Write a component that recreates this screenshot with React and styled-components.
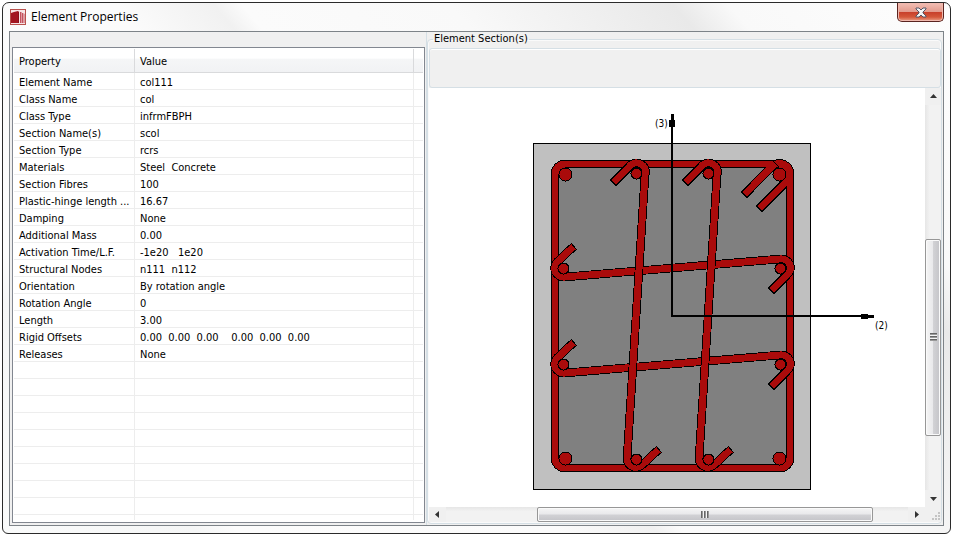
import React from "react";
import styled, { createGlobalStyle } from "styled-components";

const properties = [
    { name: "Element Name", value: "col111" },
    { name: "Class Name", value: "col" },
    { name: "Class Type", value: "infrmFBPH" },
    { name: "Section Name(s)", value: "scol" },
    { name: "Section Type", value: "rcrs" },
    { name: "Materials", value: "Steel  Concrete" },
    { name: "Section Fibres", value: "100" },
    { name: "Plastic-hinge length ...", value: "16.67" },
    { name: "Damping", value: "None" },
    { name: "Additional Mass", value: "0.00" },
    { name: "Activation Time/L.F.", value: "-1e20   1e20" },
    { name: "Structural Nodes", value: "n111  n112" },
    { name: "Orientation", value: "By rotation angle" },
    { name: "Rotation Angle", value: "0" },
    { name: "Length", value: "3.00" },
    { name: "Rigid Offsets", value: "0.00  0.00  0.00    0.00  0.00  0.00" },
    { name: "Releases", value: "None" },
];

const emptyRows = Array.from({ length: 9 }, (_, i) => i);

// centre lines of the reinforcement
const stirrup =
    "M747 192 L771.8 166.8 A10.5 10.5 0 0 1 790 175 V458 A10 10 0 0 1 780 468 H565 A10 10 0 0 1 555 458 V174 A10 10 0 0 1 565 164 H779 A10.5 10.5 0 0 1 787 181 L762 206";
const crossTies = [
    "M571 249 L557 262 A9 9 0 0 0 565 277 L780 259 A9 9 0 0 1 787 275 L774 288",
    "M571 345 L557 358 A9 9 0 0 0 565 373 L780 355 A9 9 0 0 1 787 371 L774 384",
];
const verticalTies = [
    "M616 180 L629 167 A9 9 0 0 1 645 175 L627 459 A9 9 0 0 0 642 465 L656 452",
    "M688 180 L701 167 A9 9 0 0 1 717 175 L699 459 A9 9 0 0 0 714 465 L728 452",
];
const rebars = [
    [565, 174, 7],
    [779, 174, 7],
    [565, 458, 7],
    [779, 458, 7],
    [636, 173, 6],
    [708, 173, 6],
    [636, 459, 6],
    [708, 459, 6],
    [563, 268, 6],
    [780, 268, 6],
    [563, 364, 6],
    [780, 364, 6],
];

const Bar = ({ d }) => (
    <g fill="none" strokeLinecap="square">
        <path d={d} stroke="#000" strokeWidth="8.6" />
        <path d={d} stroke="#aa0b0b" strokeWidth="6.9" />
    </g>
);

const SectionDrawing = () => (
    <Drawing viewBox="429 88 496 419" role="img" aria-label="Element section">
        <g shapeRendering="crispEdges">
            <rect x="533.5" y="143.5" width="277" height="346" fill="#c0c0c0" stroke="#000" />
            <rect x="555" y="164" width="235" height="304" rx="10" fill="#808080" />
            <Bar d={stirrup} />
            <path d="M773 161 L779 167" stroke="#000" />
            {crossTies.map((d) => (
                <Bar key={d} d={d} />
            ))}
            {verticalTies.map((d) => (
                <Bar key={d} d={d} />
            ))}
            {rebars.map(([cx, cy, r]) => (
                <circle key={`${cx}-${cy}`} cx={cx + 0.5} cy={cy + 0.5} r={r - 0.5} fill="#aa0b0b" stroke="#000" />
            ))}
            <path d="M672 115 V316 H873" fill="none" stroke="#000" strokeWidth="2" />
            <path d="M671 114 H674 V120 H675 V127 H669 V120 H671 Z" />
            <path d="M874 315 V318 H868 V319 H861 V314 H868 V315 Z" />
        </g>
        <text x="655" y="127">(3)</text>
        <text x="875" y="329">(2)</text>
    </Drawing>
);

const AppIcon = () => (
    <svg width="16" height="16" viewBox="0 0 16 16" aria-hidden="true">
        <rect x="0.5" y="0.5" width="15" height="15" fill="#f6e4e4" stroke="#b8504c" />
        <path d="M1 4 L4 3 L8 2 V14 H1 Z" fill="#a31621" />
        <path d="M8 2 L9 3 V14 H8 Z" fill="#8c101b" />
        <path d="M10 3 H11 V14 H10 Z M12 4 H13 V14 H12 Z" fill="#c4525d" />
        <path d="M11 3 H12 V14 H11 Z M13 4 L15 5 V14 H13 Z" fill="#dd9aa0" />
    </svg>
);

const Arrow = ({ d }) => (
    <svg width="7" height="7" viewBox="0 0 7 7" aria-hidden="true">
        <path d={d} fill="#333" />
    </svg>
);

const App = () => {
    return (
        <>
            <GlobalStyle />
            <Window>
                <TitleBar>
                    <AppIcon />
                    <Title>Element Properties</Title>
                    <CloseButton type="button" aria-label="Close">
                        <svg width="12" height="11" viewBox="0 0 12 11" aria-hidden="true">
                            <path
                                d="M1 1 H4 L6 3 L8 1 H11 V2 L8 5 V6 L11 9 V10 H8 L6 8 L4 10 H1 V9 L4 6 V5 L1 2 Z"
                                fill="#f6f6f6"
                                stroke="#535666"
                            />
                        </svg>
                    </CloseButton>
                </TitleBar>
                <Content>
                    <ListPane>
                        <ListBox>
                            <Table>
                                <colgroup>
                                    <col className="property" />
                                    <col />
                                    <col className="rest" />
                                </colgroup>
                                <thead>
                                    <tr>
                                        <th scope="col">Property</th>
                                        <th scope="col">Value</th>
                                        <td />
                                    </tr>
                                </thead>
                                <tbody>
                                    {properties.map((item) => (
                                        <tr key={item.name}>
                                            <td>{item.name}</td>
                                            <td>{item.value}</td>
                                            <td />
                                        </tr>
                                    ))}
                                    {emptyRows.map((row) => (
                                        <tr key={row}>
                                            <td />
                                            <td />
                                            <td />
                                        </tr>
                                    ))}
                                </tbody>
                                <tfoot>
                                    <tr>
                                        <td />
                                        <td />
                                        <td />
                                    </tr>
                                </tfoot>
                            </Table>
                        </ListBox>
                    </ListPane>
                    <SectionGroup>
                        <legend>Element Section(s)</legend>
                        <ToolPanel />
                        <Viewer>
                            <SectionDrawing />
                            <ScrollBar $vertical>
                                <ScrollButton type="button" aria-label="Scroll up">
                                    <Arrow d="M0 5 L3.5 1 L7 5 Z" />
                                </ScrollButton>
                                <Track $size={134} />
                                <Thumb $vertical>
                                    <Grip $vertical />
                                </Thumb>
                                <Track $size={54} />
                                <ScrollButton type="button" aria-label="Scroll down">
                                    <Arrow d="M0 2 L3.5 6 L7 2 Z" />
                                </ScrollButton>
                            </ScrollBar>
                            <ScrollBar>
                                <ScrollButton type="button" aria-label="Scroll left">
                                    <Arrow d="M5 0 L1 3.5 L5 7 Z" />
                                </ScrollButton>
                                <Track $size={91} />
                                <Thumb>
                                    <Grip />
                                </Thumb>
                                <Track $size={35} />
                                <ScrollButton type="button" aria-label="Scroll right">
                                    <Arrow d="M2 0 L6 3.5 L2 7 Z" />
                                </ScrollButton>
                            </ScrollBar>
                            <SizeGrip>
                                <svg width="10" height="10" viewBox="0 0 10 10" aria-hidden="true">
                                    <path
                                        d="M7 0h2v2h-2z M4 3h2v2h-2z M7 3h2v2h-2z M1 6h2v2h-2z M4 6h2v2h-2z M7 6h2v2h-2z"
                                        fill="#c4c4c4"
                                    />
                                </svg>
                            </SizeGrip>
                        </Viewer>
                    </SectionGroup>
                </Content>
            </Window>
        </>
    );
};

const GlobalStyle = createGlobalStyle`
    * {
        box-sizing: border-box;
    }
    body {
        margin: 0;
        background: #fff;
        color: #000;
        font-family: "DejaVu Sans Condensed", Tahoma, sans-serif;
        font-size: 11px;
        line-height: 14px;
    }
    #root {
        display: flex;
        min-height: 100vh;
        padding: 2px 2px 3px;
    }
`;

const Window = styled.div`
    flex: 1;
    min-width: 0;
    display: flex;
    flex-direction: column;
    padding: 0 6px 7px;
    border: 1px solid #2b2b2b;
    border-radius: 7px 7px 6px 6px;
    background: linear-gradient(
        50deg,
        #fafbfb 0%,
        #f5f6f6 14%,
        #fcfcfc 17%,
        #fbfbfb 40%,
        #f1f1f1 47%,
        #fbfbfb 49%,
        #f9f9f9 64%,
        #e9e9e9 80%,
        #f9f9f9 84%,
        #fdfdfd 100%
    );
`;

const TitleBar = styled.header`
    display: flex;
    align-items: center;
    height: 28px;
    padding-left: 1px;
`;

const Title = styled.h1`
    flex: 1;
    margin: 0;
    padding-left: 5px;
    font-family: "Open Sans", "Segoe UI", sans-serif;
    font-size: 12px;
    font-weight: 400;
    line-height: 16px;
`;

const CloseButton = styled.button`
    align-self: flex-start;
    display: flex;
    justify-content: center;
    align-items: center;
    width: 47px;
    height: 19px;
    padding: 0;
    border: 1px solid #5a2420;
    border-top: none;
    border-radius: 0 0 5px 5px;
    background: linear-gradient(#f3bfb5 0%, #e39b8d 48%, #c8402b 52%, #d4573a 78%, #eba189 100%);
    box-shadow: inset 0 0 0 1px #f0b9ae;
`;

const Content = styled.main`
    flex: 1;
    display: grid;
    grid-template-columns: 417fr 516fr;
    border: 1px solid #7d8388;
    background: #f0f0f0;
`;

const ListPane = styled.section`
    display: flex;
    min-width: 0;
    padding: 15px 1px 2px 2px;
    border-right: 1px solid #d5dfe5;
`;

const ListBox = styled.div`
    flex: 1;
    min-width: 0;
    display: flex;
    padding: 1px 1px 0;
    border: 1px solid #828790;
    background: #fff;
`;

const Table = styled.table`
    flex: 1;
    width: 100%;
    align-self: flex-start;
    table-layout: fixed;
    border-collapse: separate;
    border-spacing: 0;

    .property {
        width: 121px;
    }
    .rest {
        width: 9px;
    }
    th,
    td {
        height: 17px;
        padding: 2px 5px 0;
        border-right: 1px solid #ededed;
        border-bottom: 1px solid #ededed;
        font-weight: 400;
        line-height: 14px;
        text-align: left;
        white-space: pre;
        overflow: hidden;
    }
    tbody td {
        padding-top: 4px;
        line-height: 12px;
    }
    th,
    thead td {
        height: 24px;
        border-color: #d9dadc;
        background: linear-gradient(#fff 40%, #f5f6f7 44%, #f1f2f4);
    }
    td:last-child {
        padding: 0;
        border-right: none;
    }
    tfoot td {
        height: 5px;
        padding: 0;
        border-bottom: none;
    }
`;

const SectionGroup = styled.fieldset`
    display: flex;
    flex-direction: column;
    min-width: 0;
    margin: 0 1px 1px 0;
    padding: 2px 0 1px 1px;
    border: 1px solid #d5dfe5;
    border-radius: 4px;
    box-shadow: inset 0 0 0 1px #fafafa;

    legend {
        padding: 0 1px;
        margin-left: 4px;
    }
`;

const ToolPanel = styled.div`
    height: 40px;
    border: 1px solid #d5dfe5;
    border-radius: 3px;
    box-shadow: inset 0 1px 0 #fff;
`;

const Viewer = styled.div`
    flex: 1;
    display: grid;
    grid-template-columns: minmax(0, 1fr) 16px;
    grid-template-rows: 1fr 15px;
    background: #fff;
`;

const Drawing = styled.svg`
    display: block;
    width: 100%;
    height: 100%;

    text {
        font-size: 10px;
    }
`;

const ScrollBar = styled.div`
    display: flex;
    flex-direction: ${({ $vertical }) => ($vertical ? "column" : "row")};
    background: linear-gradient(${({ $vertical }) => ($vertical ? "to right" : "to bottom")}, #e6e6e6, #f2f2f2 30%);
`;

const ScrollButton = styled.button`
    display: flex;
    flex: 0 0 17px;
    justify-content: center;
    align-items: center;
    padding: 0;
    border: none;
    background: #f0f0f0;
`;

const Track = styled.div`
    flex: ${({ $size }) => $size} 1 0;
`;

const Thumb = styled.div`
    display: flex;
    flex: ${({ $vertical }) => ($vertical ? 196 : 335)} 1 0;
    justify-content: center;
    align-items: center;
    border: 1px solid #979797;
    border-radius: 2px;
    background: linear-gradient(
        ${({ $vertical }) => ($vertical ? "to right" : "to bottom")},
        #f5f5f5,
        #e9e9eb 48%,
        #d2d2d5 52%,
        #c4c4c8
    );
    box-shadow: inset 0 0 0 1px #fafafa;
`;

const Grip = styled.div`
    width: ${({ $vertical }) => ($vertical ? 7 : 8)}px;
    height: ${({ $vertical }) => ($vertical ? 8 : 7)}px;
    background: repeating-linear-gradient(
        ${({ $vertical }) => ($vertical ? "to bottom" : "to right")},
        #666 0 1px,
        #999 1px 2px,
        #f4f4f4 2px 3px
    );
`;

const SizeGrip = styled.div`
    display: flex;
    justify-content: flex-end;
    align-items: flex-end;
    background: #f0f0f0;
`;

export default App;
